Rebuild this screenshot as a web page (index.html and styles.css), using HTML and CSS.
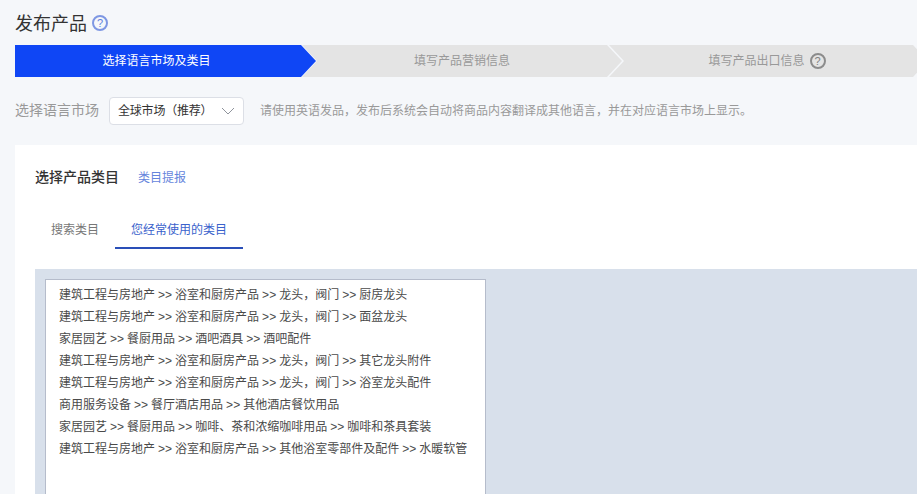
FILE: index.html
```html
<!DOCTYPE html>
<html>
<head>
<meta charset="utf-8">
<title>发布产品</title>
<link rel="stylesheet" href="styles.css">
</head>
<body>
<div class="page">
	<h1 class="title">发布产品 <span class="help help-blue">?</span></h1>

	<div class="steps">
		<div class="step step-first">选择语言市场及类目</div>
		<div class="step step-second">填写产品营销信息</div>
		<div class="step step-third">填写产品出口信息 <span class="help help-gray">?</span></div>
	</div>

	<div class="market">
		<span class="market-label">选择语言市场</span>
		<div class="select">
			<span>全球市场（推荐）</span>
			<svg class="arrow" width="14" height="8" viewBox="0 0 14 8"><path d="M1 1l6 6 6-6" fill="none" stroke="#8f949c" stroke-width="1"/></svg>
		</div>
		<span class="market-hint">请使用英语发品，发布后系统会自动将商品内容翻译成其他语言，并在对应语言市场上显示。</span>
	</div>

	<div class="panel">
		<div class="panel-head">
			<b class="panel-title">选择产品类目</b>
			<a class="panel-link">类目提报</a>
		</div>
		<div class="tabs">
			<div class="tab">搜索类目</div>
			<div class="tab tab-active">您经常使用的类目</div>
		</div>
		<div class="cat-box">
			<ul class="cat-list">
				<li>建筑工程与房地产 &gt;&gt; 浴室和厨房产品 &gt;&gt; 龙头，阀门 &gt;&gt; 厨房龙头</li>
				<li>建筑工程与房地产 &gt;&gt; 浴室和厨房产品 &gt;&gt; 龙头，阀门 &gt;&gt; 面盆龙头</li>
				<li>家居园艺 &gt;&gt; 餐厨用品 &gt;&gt; 酒吧酒具 &gt;&gt; 酒吧配件</li>
				<li>建筑工程与房地产 &gt;&gt; 浴室和厨房产品 &gt;&gt; 龙头，阀门 &gt;&gt; 其它龙头附件</li>
				<li>建筑工程与房地产 &gt;&gt; 浴室和厨房产品 &gt;&gt; 龙头，阀门 &gt;&gt; 浴室龙头配件</li>
				<li>商用服务设备 &gt;&gt; 餐厅酒店用品 &gt;&gt; 其他酒店餐饮用品</li>
				<li>家居园艺 &gt;&gt; 餐厨用品 &gt;&gt; 咖啡、茶和浓缩咖啡用品 &gt;&gt; 咖啡和茶具套装</li>
				<li>建筑工程与房地产 &gt;&gt; 浴室和厨房产品 &gt;&gt; 其他浴室零部件及配件 &gt;&gt; 水暖软管</li>
			</ul>
		</div>
	</div>
</div>
</body>
</html>
```

FILE: styles.css
```css
html, body {margin: 0; padding: 0; height: 100%; overflow: hidden;}
body {background: #f5f7fa; color: #333; font: 12px/1.4 "Liberation Sans", "Noto Sans CJK SC", sans-serif;}
.page {padding: 12px 0 0 15px; height: 482px; overflow: hidden;}

.title {margin: 0; height: 24px; padding-bottom: 9px; font-size: 18px; font-weight: 400; line-height: 24px; color: #333; display: flex; align-items: center; gap: 5px;}
.help {display: inline-block; flex: none; box-sizing: border-box; width: 16px; height: 16px; border-radius: 50%; text-align: center; font-family: "Liberation Sans", sans-serif; font-size: 11px; line-height: 13px;}
.help-blue {border: 2px solid #7e97e3; color: #5f7fdc; margin-top: -2px;}
.help-gray {border: 2px solid #8c8c8c; color: #808080; margin-left: 2px;}

.steps {display: flex; height: 32px; margin-right: -40px;}
.step {height: 32px; line-height: 32px; text-align: center; font-size: 12px; color: #999; background: #e4e4e4; white-space: nowrap; box-sizing: border-box; flex: none;}
.step-first {width: 301px; padding-right: 18px; background: #0f46f5; color: #fff; clip-path: polygon(0 0, 286px 0, 301px 16px, 286px 32px, 0 32px);}
.step-second {width: 320px; margin-left: -14px; clip-path: polygon(0 0, 305px 0, 320px 16px, 305px 32px, 0 32px, 15px 16px);}
.step-third {width: 319px; margin-left: -13px; padding-right: 3px; display: flex; align-items: center; justify-content: center; gap: 3px; clip-path: polygon(0 0, 304px 0, 319px 16px, 304px 32px, 0 32px, 15px 16px);}

.market {display: flex; align-items: center; height: 28px; margin-top: 20px;}
.market-label {width: 94px; flex: none; font-size: 14px; color: #999;}
.select {width: 135px; height: 28px; flex: none; box-sizing: border-box; display: flex; align-items: center; justify-content: space-between; padding: 0 8px; background: #fff; border: 1px solid #dcdfe6; border-radius: 4px; color: #333; white-space: nowrap; letter-spacing: -0.2px;}
.arrow {flex: none;}
.market-hint {margin-left: 16px; color: #999; white-space: nowrap;}

.panel {margin-top: 20px; background: #fff; height: 360px; padding: 21px 0 0 20px;}
.panel-head {display: flex; align-items: center; height: 24px;}
.panel-title {font-size: 14px; font-weight: 500; color: #333;}
.panel-link {margin-left: 19px; color: #6584dc;}

.tabs {display: flex; margin-top: 20px; height: 39px;}
.tab {padding: 0 16px; height: 39px; line-height: 40px; color: #777; box-sizing: border-box;}
.tab-active {color: #3a62cc; border-bottom: 2px solid #2a4fb8;}

.cat-box {margin-top: 20px; background: #d8e0eb; padding: 10px; height: 300px;}
.cat-list {list-style: none; margin: 0; width: 441px; height: 290px; box-sizing: border-box; padding: 4px 0 0 13px; background: #fff; border: 1px solid #b5bccb;}
.cat-list li {height: 22px; line-height: 22px; white-space: nowrap; color: #4a4a4a; word-spacing: -0.3px;}
```
